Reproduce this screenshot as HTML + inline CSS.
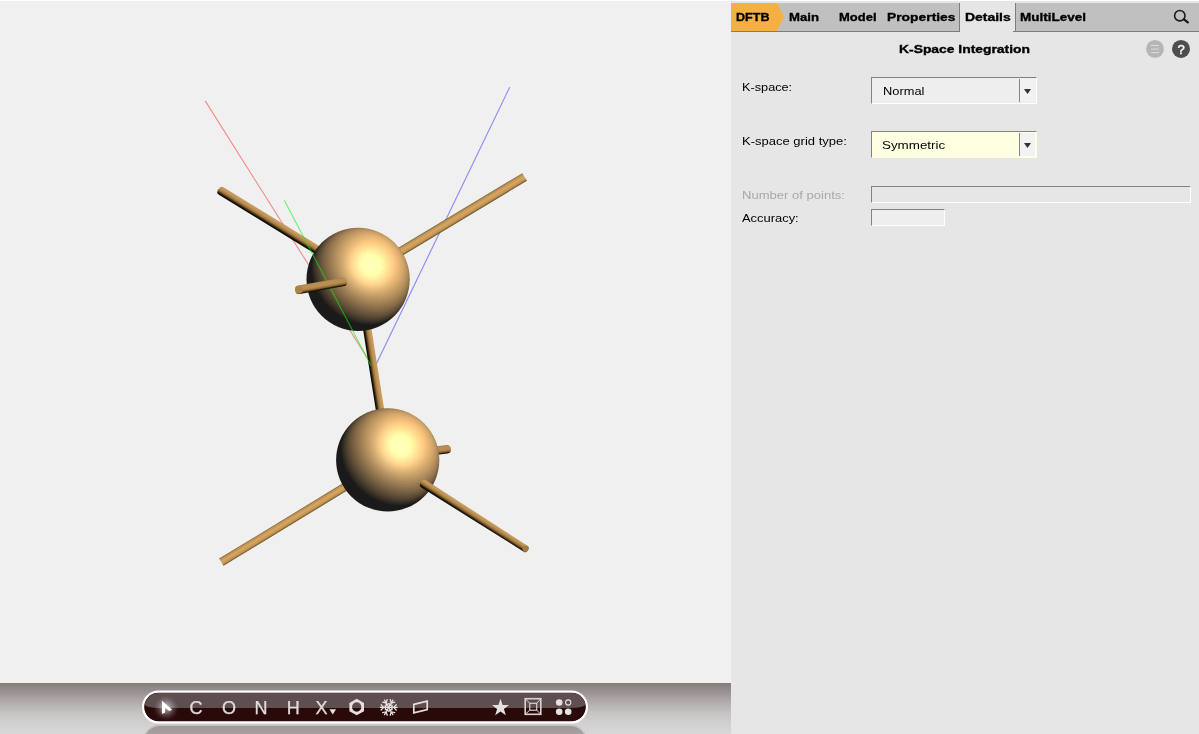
<!DOCTYPE html>
<html>
<head>
<meta charset="utf-8">
<title>AMSinput</title>
<style>
*{box-sizing:border-box;margin:0;padding:0}
html,body{width:1199px;height:734px;overflow:hidden;background:#e6e6e6;font-family:"Liberation Sans",sans-serif;}
#root{position:relative;width:1199px;height:734px;overflow:hidden;background:#e6e6e6}
#view{position:absolute;left:0;top:0;width:731px;height:683px;background:#f0f0f0;border-top:1px solid #fff}
#scene{position:absolute;left:0;top:0;width:731px;height:683px}
#bar{position:absolute;left:0;top:683px;width:731px;height:51px;background:linear-gradient(to bottom,#857b7b 0px,#9a9292 9px,#b3aeae 20px,#c6c3c3 30px,#d2d0d0 41px,#d9d8d8 51px)}
#barsvg{position:absolute;left:0;top:0;width:731px;height:51px}
#panel{position:absolute;left:731px;top:0;width:468px;height:734px;background:#e6e6e6}
#topline{position:absolute;left:0;top:0;width:1199px;height:1px;background:#fff}
#topline2{position:absolute;left:731px;top:1px;width:468px;height:2px;background:#f4f4f4}
#tabs{position:absolute;left:0;top:3px;width:468px;height:28px;background:#c0c0c0}
#tabline1{position:absolute;left:0;top:31px;width:229px;height:1px;background:#7d7d7d}
#tabline2{position:absolute;left:282px;top:31px;width:186px;height:1px;background:#7d7d7d}
#tabsel{position:absolute;left:229px;top:3px;width:55px;height:29px;background:#e6e6e6}
.vsep{position:absolute;top:3px;width:1px;height:28px;background:#7d7d7d}
.t{position:absolute;white-space:nowrap;color:#000;line-height:1;transform-origin:0 0}
.b{font-weight:bold;-webkit-text-stroke:0.35px #000}
.combo{position:absolute;left:140px;width:166px;height:27px;border-top:1px solid #828282;border-left:1px solid #828282;border-bottom:1px solid #fff;border-right:1px solid #fff;background:#eee}
.combo .btn{position:absolute;left:147px;top:1px;width:16px;height:23px;background:#f2f2f2;border-left:1px solid #868686}
.combo svg{position:absolute;left:152px;top:11px}
.entry{position:absolute;left:140px;height:17px;border-top:1px solid #828282;border-left:1px solid #828282;border-bottom:1px solid #fff;border-right:1px solid #fff}
</style>
</head>
<body>
<div id="root">
  <div id="view">
    <svg id="scene" width="731" height="683" viewBox="0 0 731 683">
      <defs>
        <clipPath id="ballclip"><circle cx="0" cy="0" r="51.6"/></clipPath>
        
<filter id="ballf" filterUnits="userSpaceOnUse" x="-60" y="-60" width="330" height="120" color-interpolation-filters="sRGB">
<feGaussianBlur in="SourceGraphic" stdDeviation="0.7" result="b"/>
<feOffset in="b" dx="-200" dy="0" result="sh"/>
<feComposite in="b" in2="sh" operator="arithmetic" k1="0" k2="1" k3="1" k4="0"/>
</filter>
<g id="ball">
<g clip-path="url(#ballclip)">
<g filter="url(#ballf)">
<rect x="-60" y="-60" width="120" height="120" fill="#1a1a1a"/>
<path fill="#201e1c" d="M-57.8,-57.8 57.8,-57.8 57.8,50 39.1,33.8 36,36.8 32.6,39.5 29.3,41.4 25.4,43.2 21.2,44.4 17,45.3 12.5,45.6 7.9,45.5 3.3,45 -1.5,44 -6.2,42.6 -10.9,40.6 -15.4,38.3 -19.8,35.6 -23.9,32.7 -27.8,29.3 -31.4,25.7 -34.7,21.8 -37.6,17.8 -40.1,13.7 -42.2,9.4 -44,5 -45.3,0.6 -46.3,-4 -46.7,-8.5 -46.8,-12.7 -46.3,-17 -45.5,-21.1 -44.3,-24.7 -42.6,-28.4 -40.6,-31.6 -37.8,-35.3 -37.8,-35.4 -57.8,-54.3Z"/>
<path fill="#26231f" d="M-56.7,-57.8 57.8,-57.8 57.8,46 40.5,32.2 37.2,35.6 34.1,38.1 30.8,40.3 27.2,42 22.9,43.5 18.7,44.5 14.3,45 9.6,45 5,44.6 0.2,43.7 -4.6,42.3 -9.4,40.5 -13.9,38.3 -18.3,35.6 -22.5,32.7 -26.6,29.3 -30.3,25.6 -33.7,21.7 -36.8,17.5 -39.4,13.3 -41.6,8.9 -43.5,4.2 -44.9,-0.4 -45.8,-5 -46.2,-9.6 -46.2,-14.1 -45.7,-18.3 -44.7,-22.5 -43.3,-26.2 -41.4,-30.1 -39.1,-33.5 -36.2,-36.9Z"/>
<path fill="#2b2722" d="M-52.3,-57.8 57.8,-57.8 57.8,42.2 41.8,30.6 37.8,34.9 34.5,37.6 30.4,40.1 25.6,42.2 20.6,43.6 15.4,44.3 9.8,44.3 4.3,43.7 0.2,42.9 -3.9,41.7 -7.8,40.3 -11.8,38.5 -15.5,36.4 -19.3,34 -22.8,31.4 -26.2,28.5 -29.9,24.9 -33.4,20.8 -36.4,16.6 -39.1,12.2 -41.4,7.5 -43.2,2.9 -44.4,-1.7 -45.3,-6.4 -45.6,-11 -45.5,-15.6 -44.9,-19.8 -43.7,-24.2 -42.2,-28 -40.2,-31.6 -38.1,-34.5 -34.7,-38.3Z"/>
<path fill="#312b24" d="M-48.1,-57.8 57.8,-57.8 57.8,38.7 43,28.8 39.5,32.9 36.1,36 32.2,38.7 27.5,41 22.5,42.6 17.5,43.4 12.1,43.7 6.5,43.3 2.2,42.6 -2.1,41.4 -6.4,40 -10.4,38.2 -14.4,36 -18.3,33.6 -22.1,30.8 -25.6,27.9 -28.7,24.9 -31.7,21.6 -34.4,18.1 -36.8,14.5 -38.9,10.8 -40.8,6.9 -42.3,3.1 -43.5,-0.8 -44.6,-6.5 -45,-12.1 -44.7,-17.5 -43.7,-22.7 -42.1,-27.4 -39.8,-31.8 -37.4,-35.3 -33.1,-39.8Z"/>
<path fill="#373026" d="M-44.2,-57.8 57.8,-57.8 57.8,35.3 44.1,27 41,31 37.6,34.5 33.7,37.4 29.3,39.7 24.5,41.5 19.3,42.6 14.1,43 8.5,42.8 4,42.1 -0.4,41.1 -4.7,39.7 -9.1,37.9 -13.4,35.6 -17.5,33.1 -21.4,30.3 -25.1,27.2 -28.3,24 -31.4,20.5 -34.1,17 -36.6,13.1 -38.8,9.2 -40.6,5.1 -42.1,1 -43.2,-3.1 -44.1,-8.7 -44.4,-14.1 -43.9,-19.3 -42.7,-24.5 -40.8,-29.3 -38.3,-33.6 -35.3,-37.4 -31.4,-41Z"/>
<path fill="#3c3429" d="M-40.5,-57.8 57.8,-57.8 57.8,32.1 45.3,25.1 42,29.7 38.7,33.2 35.1,36.1 30.8,38.5 26.2,40.4 21.2,41.6 16,42.2 10.4,42.2 5.8,41.6 1.2,40.6 -3.3,39.3 -7.9,37.4 -12.3,35.2 -16.6,32.6 -20.6,29.7 -24.5,26.5 -27.9,23.1 -31.1,19.5 -34,15.6 -36.5,11.6 -38.7,7.3 -40.5,3.3 -41.9,-1 -42.9,-5.4 -43.6,-11 -43.6,-16.4 -43,-21.4 -41.6,-26.4 -39.7,-30.8 -37,-35.1 -34,-38.5 -29.7,-42.4Z"/>
<path fill="#42382c" d="M-37,-57.8 57.8,-57.8 57.8,29 46.2,23.2 43.3,27.7 40.3,31.3 36.6,34.5 32.4,37.2 27.7,39.2 22.9,40.6 17.7,41.4 12.3,41.5 7.5,41 2.9,40.2 -1.9,38.8 -6.6,37 -11.2,34.8 -15.6,32.1 -19.9,29.1 -23.9,25.7 -27.4,22.3 -30.6,18.5 -33.6,14.4 -36.2,10.2 -38.4,6 -40.2,1.5 -41.5,-2.9 -42.4,-7.3 -43,-12.7 -42.8,-18.1 -42,-23.1 -40.4,-28.1 -38.3,-32.6 -35.5,-36.6 -32,-40.3 -27.8,-43.5Z"/>
<path fill="#483d2e" d="M-33.6,-57.8 57.8,-57.8 57.8,26 47.2,21.2 44.5,25.8 41.6,29.5 38.1,32.8 34.1,35.7 29.5,38 24.7,39.5 19.5,40.5 14.1,40.7 9.2,40.4 4.2,39.6 -0.8,38.2 -5.6,36.4 -10.4,34.1 -14.8,31.5 -19.3,28.4 -23.3,24.9 -27,21.3 -30.3,17.3 -33.3,13.2 -35.9,8.9 -38.1,4.4 -39.8,-0.2 -41.1,-4.8 -41.9,-9.4 -42.3,-14.8 -41.9,-20.2 -40.8,-25.2 -39.1,-30.1 -36.8,-34.3 -33.7,-38.3 -30.3,-41.6 -26,-44.7Z"/>
<path fill="#4e4130" d="M-30.3,-57.8 57.8,-57.8 57.8,23 48,19.1 45.7,23.7 42.8,27.8 39.3,31.4 35.4,34.3 31.1,36.6 26.4,38.3 21.2,39.5 15.8,39.9 10.8,39.7 5.8,39 0.8,37.7 -4.2,35.9 -9.1,33.7 -13.9,30.9 -18.3,27.8 -22.6,24.3 -26.4,20.4 -29.8,16.4 -32.8,12.1 -35.4,7.7 -37.6,3.1 -39.3,-1.5 -40.6,-6.4 -41.3,-11.2 -41.5,-16.6 -40.9,-22 -39.7,-27 -37.8,-31.6 -35.3,-35.8 -32.1,-39.7 -28.3,-43 -24.1,-45.7Z"/>
<path fill="#544633" d="M-27.2,-57.8 57.8,-57.8 57.8,20.1 48.7,17 48.5,17.9 46.6,21.8 43.9,26 40.6,29.6 37,32.6 32.6,35.3 27.9,37.2 22.7,38.4 17.3,39 12.3,38.9 7.1,38.3 1.9,37.1 -3.1,35.3 -8.1,33.1 -12.9,30.3 -17.5,27.1 -21.9,23.5 -25.7,19.6 -29.3,15.4 -32.4,11 -35.1,6.3 -37.2,1.5 -38.9,-3.5 -40,-8.3 -40.6,-13.1 -40.6,-18.5 -39.9,-23.7 -38.5,-28.5 -36.4,-33.2 -33.7,-37.4 -30.3,-41 -26.8,-43.9 -22,-46.8Z"/>
<path fill="#594a36" d="M-24.1,-57.8 57.8,-57.8 57.8,17.3 49.5,14.8 47.4,20 45.1,24 42,27.8 38.1,31.2 33.9,33.9 29.3,35.9 24.3,37.3 18.9,38.1 13.9,38.1 8.6,37.6 3.3,36.4 -1.9,34.7 -7.1,32.4 -12,29.7 -16.8,26.4 -21.2,22.7 -25.2,18.7 -28.7,14.4 -31.9,9.8 -34.6,5 -36.8,0 -38.3,-5 -39.3,-9.8 -39.8,-14.8 -39.7,-20.2 -38.8,-25.4 -37.2,-30.3 -34.9,-34.9 -32.1,-38.7 -28.7,-42.2 -25.1,-44.9 -19.9,-47.8Z"/>
<path fill="#5f4e38" d="M-21,-57.8 57.8,-57.8 57.8,14.4 50.1,12.5 50,13.1 48.4,17.6 46,22 43.2,25.9 39.5,29.5 35.3,32.4 30.6,34.7 25.6,36.2 20.4,37.1 15.2,37.2 10,36.8 4.6,35.7 -0.8,34 -6,31.8 -11,29.1 -15.8,25.8 -20.4,21.9 -24.5,17.9 -28.1,13.5 -31.4,8.7 -34,3.9 -36.1,-1.2 -37.7,-6.4 -38.7,-11.6 -39,-16.6 -38.7,-22 -37.6,-27.2 -35.8,-32 -33.3,-36.4 -30.2,-40.3 -26.7,-43.5 -22.6,-46.2 -17.7,-48.5Z"/>
<path fill="#65533a" d="M-18,-57.8 57.8,-57.8 57.8,11.6 50.7,10.2 49.9,12.9 48.5,16.8 47.2,19.6 45.5,22.4 43.5,24.9 41.2,27.3 38.7,29.4 36,31.2 32.4,33.2 28.3,34.7 24.1,35.7 19.6,36.2 15,36.3 10.2,35.8 5.5,34.9 0.8,33.5 -3.9,31.6 -8.4,29.3 -12.8,26.6 -17,23.5 -20.8,20 -24.5,16.2 -27.7,12.1 -30.6,7.9 -32.7,4 -34.5,0 -36,-4.1 -37.1,-8.3 -37.8,-12.5 -38.1,-16.6 -38,-20.6 -37.4,-24.5 -36.3,-28.9 -34.6,-32.9 -32.6,-36.6 -29.9,-40.1 -26.9,-43 -23.5,-45.5 -19.7,-47.6 -15.4,-49.3Z"/>
<path fill="#6a573d" d="M-15,-57.8 57.8,-57.8 57.8,8.7 51,7.7 50.3,11.2 49.1,14.9 47.6,18.3 45.8,21.2 43.7,24 41.2,26.6 38.5,28.8 35.6,30.7 32,32.5 27.9,33.9 23.5,34.9 19.1,35.3 14.4,35.2 9.6,34.7 4.8,33.6 0.2,32.1 -4.4,30.1 -8.9,27.7 -13.3,24.9 -17.3,21.7 -21.2,18.1 -24.6,14.3 -27.7,10.2 -30.4,5.9 -32.6,1.8 -34.3,-2.3 -35.6,-6.5 -36.5,-10.6 -37,-14.8 -37.1,-18.9 -36.9,-22.7 -36.1,-26.6 -34.8,-30.8 -33,-34.7 -30.8,-38.1 -28,-41.4 -25,-44.1 -21.6,-46.4 -17.7,-48.4 -13,-50.1Z"/>
<path fill="#705b40" d="M-12,-57.8 57.8,-57.8 57.8,5.8 51.4,5.2 50.7,9.2 49.5,13.4 48,17 46.2,20 43.9,23.1 41.2,25.9 38.3,28.2 35.1,30.2 31.2,31.9 27.2,33.2 22.7,34 18.3,34.3 13.7,34.1 9.1,33.4 4.2,32.3 -0.4,30.6 -5,28.5 -9.4,26 -13.7,23.1 -17.6,19.8 -21.4,16.2 -24.7,12.3 -27.7,8.1 -30.3,3.9 -32.2,-0.2 -33.9,-4.4 -35,-8.7 -35.8,-12.7 -36.2,-17 -36.1,-21 -35.6,-24.9 -34.7,-28.7 -33.2,-32.7 -31.3,-36.4 -28.9,-39.7 -26,-42.8 -22.6,-45.5 -19,-47.6 -15.4,-49.1 -10.5,-50.7Z"/>
<path fill="#766042" d="M-8.9,-57.8 57.8,-57.8 57.8,2.8 51.6,2.5 51.1,6.9 50.1,11 48.5,15.1 46.6,18.7 44.1,22.1 41.2,25 38,27.6 34.3,29.7 30.4,31.3 26.2,32.4 21.8,33.1 17.3,33.2 12.7,32.9 8.1,32.1 3.5,30.8 -1.2,29 -5.8,26.8 -10,24.2 -14.2,21.2 -18.1,17.8 -21.7,14.1 -24.9,10.2 -27.7,6 -30.2,1.5 -32,-2.6 -33.4,-6.7 -34.4,-11 -35,-15 -35.2,-19.1 -34.9,-23.1 -34.3,-27 -33.2,-30.8 -31.5,-34.7 -29.2,-38.3 -26.5,-41.6 -23.6,-44.3 -20.2,-46.6 -16.5,-48.5 -12.8,-49.9 -7.9,-51Z"/>
<path fill="#7c6444" d="M-5.7,-57.8 57.8,-57.8 57.8,-0.3 51.6,-0.3 51.2,5.1 50.5,9 48.9,13.5 46.8,17.6 44.1,21.2 41,24.3 37.5,27 33.5,29.1 29.7,30.6 25.4,31.6 21,32.1 16.6,32.1 11.9,31.7 7.3,30.7 2.7,29.3 -2,27.4 -6.4,25.1 -10.6,22.3 -14.6,19.2 -18.5,15.7 -21.9,11.9 -25,7.9 -27.7,3.7 -29.9,-0.8 -31.6,-4.9 -32.8,-9.1 -33.7,-13.3 -34.1,-17.3 -34.1,-21.4 -33.6,-25.4 -32.8,-29.3 -31.5,-32.7 -29.7,-36.4 -27.3,-39.9 -24.4,-43 -21.3,-45.5 -17.9,-47.6 -14,-49.3 -10.2,-50.5 -5.1,-51.4Z"/>
<path fill="#826847" d="M-2.4,-57.8 57.8,-57.8 57.8,-3.6 51.6,-3.2 51.4,2.5 50.7,7.3 49.1,12.2 47,16.4 44.3,20.1 40.8,23.6 37,26.3 32.7,28.4 28.7,29.8 24.5,30.7 20,31 15.6,30.9 11,30.3 6.4,29.2 1.7,27.6 -2.9,25.5 -7.1,23.1 -11.4,20.2 -15.3,17 -18.9,13.4 -22.1,9.6 -25,5.6 -27.5,1.3 -29.7,-3.2 -31.1,-7.3 -32.2,-11.6 -32.9,-15.8 -33.1,-19.8 -32.8,-23.9 -32.2,-27.7 -31.1,-31.4 -29.7,-34.8 -27.6,-38.3 -25.1,-41.4 -22.1,-44.3 -18.9,-46.6 -15.3,-48.5 -11.1,-50.1 -6.9,-51.1 -2.2,-51.6Z"/>
<path fill="#876d4a" d="M1,-57.8 57.8,-57.8 57.8,-7.1 51.2,-6.3 51.4,-6 51.5,-3.3 51.4,0.9 51,4.3 50.5,7.1 49.7,9.7 48.5,12.5 47.2,15.1 45.5,17.7 42.6,21 39.3,23.8 35.6,26.1 31.6,27.8 27.5,29 23.3,29.7 18.9,29.9 14.3,29.6 9.6,28.7 5,27.4 0.4,25.7 -3.9,23.5 -8.1,20.9 -12.2,17.9 -16,14.5 -19.5,10.8 -22.5,6.9 -25.2,2.8 -27.5,-1.5 -29.4,-6 -30.6,-10.1 -31.5,-14.3 -31.9,-18.3 -31.9,-22.3 -31.4,-26.2 -30.6,-29.9 -29.3,-33.5 -27.6,-36.8 -25.2,-40.3 -22.6,-43.2 -19.5,-45.7 -16.1,-47.8 -12.2,-49.5 -8.2,-50.7 -3.1,-51.5 0.9,-51.6Z"/>
<path fill="#8d714c" d="M57.8,-57.8 57.8,-10.9 50.9,-9.6 51.3,-5.4 51.4,-0.6 51,3.1 50.1,7.3 48.7,11 46.8,14.7 44.5,17.9 42,20.5 39.1,22.9 36,24.8 32.7,26.3 29.1,27.5 25.2,28.3 21.4,28.6 17.3,28.6 13.3,28.2 9.2,27.3 5,26.1 1,24.5 -3.1,22.4 -6.9,20.1 -10.6,17.5 -14.1,14.5 -17.3,11.2 -20,8.1 -22.5,4.6 -24.8,1 -26.6,-2.7 -28.1,-6.4 -29.4,-10.2 -30.2,-14.1 -30.7,-17.9 -30.8,-21.6 -30.5,-25.2 -29.8,-28.7 -28.8,-32.2 -27.4,-35.4 -25.7,-38.3 -23.7,-41 -21.2,-43.5 -18.6,-45.7 -15.9,-47.4 -12.8,-48.9 -9.5,-50.1 -6.4,-50.9 -2.3,-51.4 4,-51.6 4.3,-51.4 4.8,-57.8Z"/>
<path fill="#93754e" d="M57.8,-57.8 57.8,-15.2 50.1,-13.2 50.9,-8.3 51.2,-3.5 51,0.9 50.3,5.2 48.9,9.3 47.2,12.9 44.9,16.3 41.9,19.5 39.3,21.6 36.2,23.5 32.9,25.1 29.3,26.3 25.6,27 21.8,27.4 17.7,27.3 13.7,26.9 9.6,26.1 5.6,24.9 1.5,23.2 -2.5,21.2 -6.3,18.9 -9.8,16.3 -13.3,13.3 -16.4,10.2 -19.1,7.1 -21.5,3.7 -23.7,0.1 -25.5,-3.5 -27,-7.1 -28.2,-11 -29,-14.8 -29.5,-18.5 -29.5,-22.2 -29.2,-25.8 -28.6,-29.3 -27.6,-32.6 -26.2,-35.6 -24.5,-38.5 -22.5,-41.2 -20.2,-43.5 -17.7,-45.7 -14.6,-47.6 -11.3,-49.1 -7.8,-50.3 -4.2,-51 -0.5,-51.4 3.3,-51.5 7.9,-51 8.9,-57.8Z"/>
<path fill="#987a51" d="M57.8,-57.8 57.8,-20.2 48.7,-17.1 50,-12.9 50.9,-7.6 51,-2.5 50.5,2.6 49.3,6.9 47.4,11.3 44.9,15.1 41.8,18.4 39.1,20.6 36,22.5 32.7,23.9 29.3,25 25.6,25.8 22,26.1 18.1,26 14.1,25.6 10,24.8 6,23.5 2.1,22 -1.7,20 -5.4,17.8 -8.9,15.2 -12.3,12.3 -15.4,9.2 -18.1,6 -20.4,2.8 -22.5,-0.7 -24.4,-4.2 -25.8,-7.9 -27,-11.6 -27.8,-15.2 -28.2,-18.9 -28.3,-22.5 -28,-26 -27.4,-29.5 -26.4,-32.7 -25.1,-35.6 -23.4,-38.5 -21.4,-41.2 -19.2,-43.5 -16,-46 -12.8,-48 -9.1,-49.5 -5,-50.6 -0.8,-51.2 2.9,-51.3 8.3,-50.9 11.9,-50.3 13.7,-57.8Z"/>
<path fill="#9e7e54" d="M57.8,-57.8 57.8,-26.5 47,-21.5 49,-16.2 50.3,-10.7 50.8,-5.2 50.5,0.2 49.4,5 47.6,9.5 45.1,13.6 41.8,17.2 39.1,19.3 36.2,21.1 32.9,22.6 29.6,23.7 26,24.4 22.2,24.8 18.3,24.7 14.4,24.2 10.4,23.4 6.5,22.2 2.7,20.6 -1,18.8 -4.6,16.5 -8.1,14 -11.4,11.2 -14.4,8.1 -17,5 -19.4,1.7 -21.4,-1.5 -23.1,-5 -24.6,-8.5 -25.7,-12.1 -26.5,-15.8 -26.9,-19.5 -27,-22.9 -26.7,-26.4 -26.1,-29.7 -25.1,-32.9 -23.7,-36 -22.2,-38.7 -20.3,-41.2 -18,-43.5 -14.9,-46 -11.2,-48.2 -7.2,-49.7 -2.7,-50.8 1.7,-51.2 6.3,-51 11.4,-50.3 16.6,-49 19.5,-57.8Z"/>
<path fill="#a48256" d="M57.8,-57.8 57.8,-35.4 44.1,-27 46.9,-21.6 49.1,-15.3 50.3,-9.3 50.5,-6.4 50.5,-3.5 50.2,-0.8 49.7,2 48.9,4.7 47.9,7.3 46.6,9.8 45.3,11.9 43.5,14.1 41.6,16 39,18.1 36.1,19.8 32.9,21.3 29.7,22.3 26.2,23 22.5,23.4 18.9,23.3 15,22.9 11.2,22.1 7.3,20.9 3.5,19.4 -0.1,17.5 -3.7,15.4 -7.1,12.9 -10.4,10 -13.3,7.1 -15.8,4.1 -18.1,1 -20.1,-2.3 -21.9,-5.8 -23.3,-9.2 -24.4,-12.7 -25.1,-16.4 -25.6,-19.8 -25.6,-23.3 -25.4,-26.8 -24.7,-30.1 -23.8,-33.1 -22.5,-36 -20.9,-38.7 -19,-41.2 -16.8,-43.5 -13,-46.4 -8.9,-48.5 -4.2,-50.1 0.7,-50.9 6,-50.9 11,-50.3 17.3,-48.6 22.3,-46.6 27.6,-57.8Z"/>
<path fill="#aa8758" d="M54.9,-57.8 35.6,-37.5 38.7,-34.3 41.2,-31.2 43.4,-27.9 45.5,-24.3 47,-21 48.4,-17.3 49.3,-13.7 49.9,-10.4 50.1,-6.9 50.1,-3.5 49.6,-0.2 48.8,3.1 47.7,6 46.2,8.9 44.5,11.4 42.4,13.9 40.1,15.9 37.4,17.8 34.5,19.3 31.2,20.5 27.9,21.3 24.5,21.8 20.8,21.9 17.1,21.7 13.5,21.1 9.8,20.1 6.2,18.8 2.5,17.2 -1,15.2 -4.4,13 -7.7,10.4 -10.6,7.7 -13.2,4.8 -15.7,1.7 -17.9,-1.5 -19.7,-4.8 -21.3,-8.3 -22.5,-11.8 -23.4,-15.2 -24,-18.7 -24.2,-22.2 -24.1,-25.6 -23.6,-28.9 -22.9,-32 -21.8,-34.9 -20.3,-37.8 -18.5,-40.3 -16.5,-42.6 -14.4,-44.5 -11.9,-46.2 -9.1,-47.8 -6.3,-48.9 -3,-49.9 0.2,-50.4 3.5,-50.7 6.7,-50.6 10,-50.3 13.1,-49.7 16.6,-48.7 20.2,-47.4 24.3,-45.6 27.4,-43.8 31,-41.4 33.6,-39.3 49.4,-57.8Z"/>
<path fill="#b08b5b" d="M-12.7,-44.7 -10.1,-46.4 -7.5,-47.8 -4.5,-48.9 -1.5,-49.7 1.9,-50.2 5.2,-50.4 8.5,-50.2 12.1,-49.7 15.5,-48.9 19,-47.8 22.7,-46.2 26,-44.5 29.3,-42.4 32.2,-40.3 34.9,-38 38,-34.9 40.3,-32.2 42.8,-28.7 44.7,-25.5 46.2,-22.4 47.6,-19.1 48.5,-15.9 49.3,-12.3 49.7,-9.2 49.7,-6 49.5,-2.9 48.9,0.3 48,3.3 46.8,6.1 45.4,8.5 43.7,10.8 41.6,13.1 39.1,15.2 36.4,16.9 33.5,18.2 30.4,19.3 27.2,20 23.7,20.4 20,20.4 16.4,20 12.7,19.3 9.1,18.2 5.4,16.8 1.9,15.1 -1.4,13.1 -4.6,10.8 -7.7,8.2 -10.6,5.4 -13.1,2.5 -15.5,-0.8 -17.5,-4.1 -19.3,-7.6 -20.6,-11 -21.7,-14.6 -22.4,-18.3 -22.7,-21.8 -22.7,-25.2 -22.3,-28.5 -21.5,-31.8 -20.4,-34.9 -18.9,-37.8 -17.2,-40.3 -15.1,-42.6Z"/>
<path fill="#b58f5e" d="M-11.4,-44.5 -8.8,-46.2 -6.2,-47.5 -3.5,-48.6 -0.4,-49.4 2.7,-49.8 6,-50 9.2,-49.8 12.8,-49.3 16,-48.5 19,-47.6 22.4,-46.2 25.8,-44.5 28.9,-42.6 31.6,-40.7 34.8,-38 37.4,-35.4 39.7,-32.8 42,-29.7 43.9,-26.6 45.5,-23.6 46.8,-20.5 48,-17 48.7,-13.6 49.2,-10.4 49.3,-7.1 49,-3.9 48.5,-1 47.6,2.1 46.4,4.9 45,7.3 43.3,9.6 41.2,11.8 38.9,13.7 36.2,15.4 33.3,16.8 30.2,17.8 27,18.5 23.7,18.8 20.2,18.8 16.8,18.4 13.1,17.7 9.6,16.7 6.2,15.3 2.8,13.7 -0.4,11.8 -3.7,9.4 -6.6,6.9 -9.4,4.2 -11.9,1.3 -14.3,-1.9 -16.2,-5.1 -17.9,-8.5 -19.2,-11.9 -20.2,-15.3 -20.9,-18.7 -21.2,-22.2 -21.2,-25.4 -20.8,-28.7 -20,-31.9 -18.9,-34.9 -17.4,-37.8 -15.7,-40.3 -13.6,-42.6Z"/>
<path fill="#bb9460" d="M-9.7,-44.5 -7.3,-46 -4.5,-47.4 -1.7,-48.4 1.2,-49 4.2,-49.4 7.3,-49.5 10.4,-49.3 14,-48.7 17.1,-48 20.4,-46.8 23.5,-45.5 26.8,-43.7 29.5,-42 32.3,-39.9 35.2,-37.4 37.6,-35 39.5,-32.7 41.8,-29.6 43.7,-26.5 45.3,-23.5 46.6,-20.2 47.6,-17.1 48.3,-13.9 48.6,-10.8 48.7,-7.7 48.5,-4.6 47.9,-1.7 47.1,1.2 45.9,3.9 44.5,6.2 42.8,8.5 40.8,10.5 38.5,12.4 36,13.9 33.3,15.2 30.2,16.2 27.2,16.9 23.9,17.2 20.4,17.2 17,16.8 13.5,16.1 10,15 6.5,13.6 3.3,12 0.1,10 -2.9,7.9 -5.8,5.4 -8.5,2.7 -10.9,-0.2 -13.1,-3.3 -14.9,-6.4 -16.5,-9.6 -17.8,-12.9 -18.8,-16.4 -19.4,-19.8 -19.6,-23.1 -19.5,-26.4 -19.1,-29.5 -18.3,-32.6 -17.1,-35.4 -15.8,-38 -14,-40.5 -12,-42.6Z"/>
<path fill="#c19862" d="M-8.6,-43.9 -6.3,-45.5 -3.7,-46.8 -1,-47.8 1.7,-48.4 4.6,-48.8 7.7,-49 10.8,-48.8 13.9,-48.4 17.2,-47.6 20.1,-46.6 23.3,-45.3 26.3,-43.7 29.1,-42 32,-39.9 34.5,-37.8 37.2,-35.1 39.5,-32.4 41.4,-29.7 43.2,-27 44.7,-24 46,-20.7 47,-17.7 47.6,-14.8 48,-11.8 48.1,-8.9 47.9,-6 47.4,-3.1 46.6,-0.4 45.5,2.3 44.1,4.7 42.6,6.8 40.6,8.9 38.5,10.6 36,12.2 33.3,13.5 30.4,14.5 27.4,15.1 24.3,15.5 21,15.5 17.7,15.1 14.3,14.4 11,13.5 7.7,12.2 4.6,10.7 1.5,8.8 -1.5,6.6 -4.4,4.2 -6.9,1.7 -9.2,-1 -11.5,-4 -13.3,-7.1 -14.9,-10.2 -16.1,-13.3 -17,-16.6 -17.6,-19.8 -17.9,-23.1 -17.9,-26.2 -17.5,-29.3 -16.8,-32.2 -15.7,-35.1 -14.4,-37.6 -12.7,-39.9 -10.8,-42Z"/>
<path fill="#c69c65" d="M-7.6,-43.2 -5.4,-44.7 -2.9,-46 -0.4,-47 2.5,-47.8 5.4,-48.2 8.3,-48.4 11.4,-48.2 14.3,-47.8 17,-47.2 20,-46.2 22.9,-45.1 26,-43.5 28.8,-41.8 31.8,-39.7 34.3,-37.6 36.6,-35.3 40.6,-30.3 42.4,-27.6 43.9,-24.7 45.3,-21.5 46.2,-18.5 46.9,-15.6 47.3,-12.7 47.4,-9.8 47.2,-6.9 46.7,-4.2 46,-1.5 44.9,1 43.6,3.3 42,5.4 40.3,7.3 38.1,9 35.8,10.5 33.3,11.8 30.4,12.7 27.5,13.3 24.5,13.7 21.4,13.7 18.3,13.4 15,12.7 11.9,11.9 8.9,10.7 5.8,9.2 2.9,7.5 0,5.5 -2.7,3.3 -5.3,0.8 -7.5,-1.8 -9.6,-4.6 -11.4,-7.5 -13,-10.6 -14.2,-13.7 -15.2,-16.8 -15.8,-19.8 -16.1,-22.9 -16.1,-26 -15.8,-28.9 -15.2,-31.6 -14.3,-34.4 -13.1,-36.8 -11.5,-39.1 -9.7,-41.2Z"/>
<path fill="#cca168" d="M-5.7,-43 -3.7,-44.3 -1.3,-45.5 1.2,-46.5 3.9,-47.1 6.5,-47.5 9.4,-47.6 12.3,-47.5 15.2,-47 20.8,-45.4 23.5,-44.3 26.5,-42.8 31.7,-39.3 34.2,-37.2 36.4,-34.9 38.5,-32.5 40.5,-29.9 43.3,-24.8 44.5,-22.1 45.5,-19.1 46.1,-16.2 46.5,-13.3 46.6,-10.6 46.4,-7.9 45.9,-5.2 45.2,-2.7 44.2,-0.4 43,1.8 41.4,3.9 39.7,5.7 37.6,7.5 35.3,8.9 32.9,10 30.2,10.9 27.4,11.5 24.5,11.8 21.6,11.8 18.5,11.5 15.4,10.8 12.3,9.9 9.2,8.7 6.4,7.3 3.5,5.6 0.8,3.7 -1.7,1.5 -4,-0.8 -6.2,-3.3 -8.2,-6 -10,-8.9 -11.4,-11.8 -12.5,-14.6 -13.4,-17.7 -14,-20.8 -14.3,-23.7 -14.2,-26.6 -13.9,-29.5 -13.2,-32.2 -12.3,-34.7 -11,-37.1 -9.5,-39.3 -7.7,-41.2Z"/>
<path fill="#d2a56a" d="M-3.9,-42.6 -1.7,-43.9 0.4,-45 2.7,-45.8 5.2,-46.4 7.7,-46.7 10.4,-46.8 13.1,-46.6 15.8,-46.2 21.2,-44.7 23.9,-43.5 26.9,-42 31.9,-38.5 36.2,-34.5 39.9,-29.8 42.8,-24.7 43.9,-21.8 44.7,-19.3 45.3,-16.6 45.6,-13.9 45.7,-11.2 45.5,-8.7 45,-6.2 44.3,-3.9 43.3,-1.5 42,0.6 40.5,2.5 38.9,4.2 36.9,5.8 34.7,7.1 32.4,8.2 29.9,9 27.2,9.5 24.5,9.8 21.6,9.8 18.7,9.4 15.8,8.9 12.9,8 10,6.8 7.1,5.4 4.3,3.7 1.7,1.8 -0.6,-0.2 -2.9,-2.5 -5,-5 -6.8,-7.5 -8.4,-10.2 -9.8,-13.1 -10.8,-15.8 -11.6,-18.7 -12.1,-21.6 -12.3,-24.4 -12.2,-27.2 -11.9,-29.9 -11.2,-32.4 -10.2,-34.9 -9.1,-37 -7.5,-39.1 -5.8,-41Z"/>
<path fill="#d8aa6c" d="M-2.5,-41.6 -0.6,-42.9 1.4,-43.9 3.7,-44.8 6,-45.4 8.5,-45.8 11,-45.9 16.2,-45.4 21.3,-43.9 26.4,-41.6 31.2,-38.3 35.4,-34.4 39.1,-29.9 41.8,-25.1 43.7,-20 44.5,-15 44.6,-12.5 44.5,-10 44,-7.7 43.3,-5.3 42.4,-3.1 41.3,-1.2 39.9,0.7 38.3,2.3 36.4,3.8 34.5,5 32.2,6.1 29.9,6.9 27.4,7.4 24.7,7.7 22,7.7 19.3,7.4 16.4,6.8 13.7,6 11,4.9 8.3,3.6 5.8,2.1 3.3,0.3 -1.2,-3.8 -4.8,-8.5 -6.4,-11 -7.7,-13.7 -8.7,-16.2 -9.5,-18.9 -10,-21.6 -10.2,-24.3 -10.2,-27 -9.9,-29.5 -9.3,-31.8 -8.4,-34.1 -7.3,-36.3 -5.9,-38.3 -4.3,-40.1Z"/>
<path fill="#deae6f" d="M-1,-40.6 1,-42 2.9,-43 7.1,-44.3 11.8,-44.8 16.6,-44.3 21.6,-43 26.2,-40.8 30.8,-37.8 34.7,-34.2 38,-30.2 40.6,-25.6 42.5,-20.8 43.3,-16 43.3,-11.4 42.9,-9.1 42.3,-6.9 41.4,-4.9 40.4,-3.1 39.1,-1.3 37.7,0.2 36,1.6 34,2.9 32,3.9 29.7,4.6 27.4,5.1 24.9,5.4 22.3,5.4 19.8,5.2 17.1,4.6 14.6,3.9 9.6,1.7 4.9,-1.3 0.8,-5.1 -2.7,-9.4 -5.4,-14.3 -6.4,-16.8 -7.2,-19.3 -7.7,-21.8 -8,-24.3 -8,-26.8 -7.7,-29.1 -7.2,-31.4 -6.4,-33.5 -5.4,-35.6 -4.2,-37.4 -2.7,-39.1Z"/>
<path fill="#e3b272" d="M0.9,-39.7 2.6,-40.8 4.4,-41.8 8.3,-43 12.5,-43.5 17.1,-43.1 21.8,-41.8 26.1,-39.9 30.2,-37.2 33.9,-33.8 37,-30 39.5,-25.7 41.1,-21.4 42,-17 41.9,-12.5 41,-8.5 39.3,-4.9 36.8,-1.9 35.3,-0.6 33.4,0.6 31.6,1.5 29.5,2.2 27.4,2.7 25,3 22.7,3 20.2,2.7 15.4,1.6 10.8,-0.4 6.4,-3.3 2.6,-6.7 -0.7,-10.8 -3.2,-15.2 -4.8,-19.8 -5.5,-24.5 -5.3,-28.9 -4.8,-31 -4.1,-33.1 -3.1,-35.1 -1.9,-36.8 -0.6,-38.3Z"/>
<path fill="#e9b774" d="M3.3,-38.7 6.4,-40.5 10,-41.7 14.1,-42 18.1,-41.6 22.2,-40.4 26.2,-38.5 29.9,-36 33.3,-32.9 36.2,-29.3 38.3,-25.4 39.8,-21.4 40.4,-17.3 40.3,-13.5 39.4,-9.8 37.8,-6.6 35.4,-3.9 32.4,-1.7 28.7,-0.3 24.7,0.3 20.2,0 16,-1 11.8,-2.9 7.7,-5.6 4.2,-8.8 1.3,-12.5 -0.9,-16.6 -2.3,-20.8 -2.9,-25 -2.6,-29.1 -2.1,-31 -1.4,-32.9 0.6,-36.1Z"/>
<path fill="#efbb76" d="M5.2,-37 7.9,-38.7 11.2,-39.8 14.6,-40.2 18.3,-39.9 22.1,-38.9 25.6,-37.3 29,-35.1 32,-32.4 34.5,-29.3 36.5,-25.8 37.8,-22.3 38.5,-18.7 38.5,-15.2 37.7,-11.9 36.3,-9.1 34.3,-6.6 31.6,-4.6 28.3,-3.2 24.9,-2.7 21,-2.8 17.1,-3.7 13.3,-5.4 9.8,-7.6 6.7,-10.4 4.1,-13.7 2.1,-17.1 0.7,-20.8 0.1,-24.7 0.3,-28.3 1.2,-31.6 2.9,-34.7Z"/>
<path fill="#f4bf79" d="M8,-35.4 10.4,-36.9 13.1,-37.7 16.2,-38 19.3,-37.7 22.3,-36.8 25.3,-35.4 28.2,-33.5 30.7,-31.2 32.9,-28.5 34.5,-25.7 35.6,-22.7 36.2,-19.6 36.1,-16.6 35.5,-13.9 34.3,-11.5 32.6,-9.4 30.2,-7.7 27.5,-6.6 24.5,-6.1 21.2,-6.2 17.9,-7 14.6,-8.4 11.6,-10.4 9.1,-12.7 6.8,-15.6 5,-18.7 4,-21.8 3.5,-25 3.7,-28.1 4.5,-31 6.1,-33.5Z"/>
<path fill="#fac47c" d="M11.2,-33.1 13.1,-34.2 15.2,-34.9 17.5,-35.1 19.8,-34.8 22.3,-34.1 24.7,-33.1 26.9,-31.6 28.9,-29.7 30.5,-27.7 31.8,-25.4 32.7,-22.9 33.1,-20.6 33,-18.3 32.5,-16.2 31.6,-14.3 30.2,-12.7 28.4,-11.4 26.2,-10.5 23.9,-10.2 21.4,-10.3 18.9,-10.9 16.4,-12 14.1,-13.5 11.9,-15.4 10.2,-17.5 8.8,-20 8,-22.5 7.6,-25 7.8,-27.4 8.5,-29.7 9.6,-31.6Z"/>
<path fill="#ffc87e" d="M15.3,-29.1 16.4,-29.8 17.5,-30.2 18.9,-30.4 20.2,-30.4 21.6,-30.1 23.1,-29.4 24.5,-28.6 25.6,-27.5 26.6,-26.4 27.4,-25 28,-23.7 28.3,-22.3 28.3,-21 28,-19.6 27.5,-18.5 26.7,-17.5 25.7,-16.8 24.5,-16.2 23.1,-16 21.8,-16 20.2,-16.3 18.7,-17 17.3,-17.8 16.2,-18.8 15.1,-20 14.3,-21.4 13.8,-22.7 13.5,-24.3 13.5,-25.6 13.9,-27 14.5,-28.1Z"/>
<rect x="140" y="-60" width="120" height="120" fill="#000"/>
<path fill="#020202" d="M194.4,-44 197.7,-44.8 201.3,-45.4 204.8,-45.6 208.5,-45.5 212.1,-45 215.6,-44.3 218.9,-43.2 222.3,-41.7 225.6,-39.9 228.5,-38 231.4,-35.7 234.1,-33.1 236.4,-30.4 238.7,-27.4 240.6,-24.1 242.1,-20.8 243.3,-17.5 244.3,-13.9 244.8,-10.4 245,-6.7 244.9,-3.3 244.4,0.4 243.6,3.9 242.5,7.1 241,10.4 239.2,13.5 237.2,16.2 234.9,18.8 232.4,21.1 229.5,23.2 226.6,24.9 223.3,26.5 219.8,27.7 216.2,28.5 212.5,29 208.9,29.1 205,28.9 201.3,28.2 197.7,27.3 194,25.9 190.6,24.2 187.3,22.1 184.2,19.8 181.3,17.1 178.7,14.3 176.4,11.2 174.5,7.9 172.7,4.2 171.5,0.6 170.5,-3.1 170,-6.7 169.8,-10.6 170.1,-14.3 170.6,-17.9 171.6,-21.6 173,-25 174.6,-28.3 176.7,-31.4 179.1,-34.3 181.6,-36.8 184.6,-39.2 187.7,-41.1 190.9,-42.7Z"/>
<path fill="#050504" d="M196.7,-41.5 199.8,-42.3 202.9,-42.7 206.2,-42.9 209.4,-42.8 212.7,-42.3 216,-41.6 219.1,-40.5 222,-39.3 224.9,-37.7 227.7,-35.7 230.2,-33.6 232.5,-31.4 234.7,-28.9 236.6,-26.2 238.3,-23.3 239.6,-20.4 240.7,-17.3 241.5,-14.1 242,-10.8 242.2,-7.7 242.1,-4.4 241.7,-1.3 240.9,1.7 240,4.6 238.7,7.5 237.1,10.2 235.1,12.9 233,15.2 230.6,17.4 228.1,19.2 225.4,20.8 222.5,22.2 219.5,23.3 216.2,24 212.7,24.5 209.2,24.6 206,24.3 202.5,23.7 199.2,22.8 195.8,21.5 192.7,19.9 189.6,18 186.9,15.9 184.4,13.5 182.2,11 180.1,8.1 178.3,5 176.9,1.9 175.8,-1.2 174.9,-4.6 174.5,-7.9 174.3,-11.4 174.5,-14.8 175.1,-18.1 176,-21.4 177.2,-24.5 178.7,-27.4 180.6,-30.2 182.7,-32.7 185.1,-35.1 187.7,-37.1 190.6,-38.9 193.6,-40.4Z"/>
<path fill="#070706" d="M199.4,-40.3 202.3,-40.9 205.4,-41.2 208.5,-41.2 211.4,-40.9 214.4,-40.4 217.3,-39.5 220.2,-38.4 222.9,-37.1 225.4,-35.5 227.9,-33.7 230.3,-31.6 232.5,-29.3 234.4,-26.8 236.1,-24.1 237.5,-21.4 238.7,-18.5 239.6,-15.4 240.1,-12.5 240.4,-9.6 240.4,-6.5 240.2,-3.5 239.6,-0.6 238.8,2.1 237.6,5 236.3,7.5 234.6,10 232.7,12.3 230.6,14.4 228.3,16.3 226,17.8 223.3,19.2 220.6,20.3 217.5,21.2 214.4,21.7 211.4,22 208.1,21.9 204.8,21.5 201.5,20.7 198.5,19.7 195.6,18.4 192.7,16.8 190,14.9 187.5,12.7 185.2,10.4 183.2,7.9 181.5,5.2 179.9,2.3 178.7,-0.8 177.8,-3.9 177.2,-7.1 176.9,-10.2 177,-13.5 177.3,-16.6 178,-19.6 179.1,-22.7 180.3,-25.4 181.9,-28.1 183.8,-30.6 185.9,-32.9 188.2,-34.9 190.8,-36.7 193.6,-38.3 196.3,-39.4Z"/>
<path fill="#090908" d="M199.4,-38.9 202.1,-39.5 205,-39.8 207.9,-39.9 210.8,-39.7 213.7,-39.3 216.4,-38.6 219.1,-37.6 221.8,-36.3 224.5,-34.8 226.8,-33.1 229,-31.2 231.1,-29.1 232.9,-26.8 234.6,-24.3 236,-21.8 237.1,-19.1 238,-16.4 238.7,-13.5 239,-10.6 239.1,-7.7 238.9,-5 238.5,-2.1 237.7,0.6 236.7,3.3 235.5,5.8 234,8.1 232.4,10.2 230.4,12.3 228.3,14.1 226,15.7 223.5,17.1 221,18.2 218.1,19.1 215.2,19.7 212.3,20 209.2,20 206.2,19.7 203.3,19.2 200.2,18.2 197.3,17 194.4,15.5 191.9,13.8 189.4,11.8 187.3,9.7 185.3,7.3 183.6,4.8 182.1,2.1 180.8,-0.8 179.9,-3.7 179.2,-6.5 178.9,-9.6 178.8,-12.7 179.1,-15.8 179.7,-18.7 180.6,-21.6 181.7,-24.3 183.1,-26.8 184.9,-29.3 186.9,-31.6 189,-33.5 191.3,-35.2 193.8,-36.7 196.5,-37.9Z"/>
<path fill="#0b0c09" d="M199.4,-37.6 201.9,-38.3 204.6,-38.7 207.3,-38.8 210.2,-38.7 212.9,-38.3 215.6,-37.7 218.1,-36.9 220.8,-35.7 223.3,-34.3 225.6,-32.8 227.8,-31 229.9,-29 231.7,-26.8 233.3,-24.5 234.7,-22 235.9,-19.5 236.8,-16.8 237.5,-14.1 237.8,-11.4 238,-8.7 237.9,-6 237.5,-3.3 236.8,-0.6 235.9,1.9 234.8,4.2 233.4,6.5 231.9,8.7 230.1,10.7 228.1,12.4 226,13.9 223.7,15.3 221.2,16.5 218.5,17.4 215.8,18 212.9,18.4 210,18.5 207.1,18.2 204.2,17.7 201.3,16.9 198.7,15.9 196,14.5 193.5,12.9 191.1,11.1 188.9,9.1 186.9,6.7 185.2,4.4 183.8,1.9 182.5,-0.8 181.6,-3.5 180.9,-6.4 180.5,-9.2 180.4,-12.1 180.6,-15 181,-17.7 181.7,-20.4 182.8,-23.1 184.1,-25.6 185.6,-27.9 187.5,-30.2 189.5,-32.2 191.7,-33.9 194.2,-35.4 196.7,-36.7Z"/>
<path fill="#0e0e0b" d="M200,-36.7 202.5,-37.3 205.2,-37.7 207.7,-37.8 210.4,-37.7 213.1,-37.3 215.6,-36.8 218.1,-35.9 220.6,-34.8 222.9,-33.5 225,-32.1 227.2,-30.4 229.1,-28.5 230.9,-26.4 232.4,-24.3 233.7,-22 234.9,-19.5 235.8,-17 236.4,-14.4 236.8,-11.8 237,-9.2 236.9,-6.5 236.5,-4 236,-1.5 235.1,1 234,3.3 232.7,5.6 231.2,7.6 229.5,9.5 227.5,11.3 225.4,12.8 223.3,14.1 221,15.1 218.5,16 215.8,16.6 213.1,17 210.2,17.1 207.3,16.9 204.6,16.4 201.9,15.6 199.2,14.6 196.7,13.3 194.2,11.8 192,10 190,8.1 188.1,6 186.4,3.7 185,1.2 183.8,-1.3 182.9,-4 182.2,-6.7 181.8,-9.6 181.7,-12.3 181.9,-15 182.4,-17.7 183.1,-20.4 184.1,-22.9 185.3,-25.2 186.9,-27.5 188.6,-29.7 190.6,-31.5 192.7,-33.2 195,-34.6 197.5,-35.8Z"/>
<path fill="#10100d" d="M200,-35.7 202.3,-36.3 204.8,-36.8 207.3,-37 209.8,-36.9 212.3,-36.6 214.8,-36.1 217.3,-35.3 219.6,-34.4 222,-33.2 224.1,-31.8 226.2,-30.2 228.1,-28.3 229.9,-26.4 231.4,-24.3 232.7,-22.2 233.8,-19.8 234.7,-17.5 235.4,-15 235.8,-12.5 236.1,-10 236,-7.5 235.7,-5 235.2,-2.5 234.5,-0.2 233.5,2.1 232.3,4.2 230.8,6.4 229.3,8.2 227.5,9.8 225.5,11.4 223.5,12.6 221.2,13.8 218.7,14.7 216.2,15.4 213.7,15.7 211,15.9 208.3,15.7 205.6,15.3 203.1,14.7 200.4,13.7 197.9,12.5 195.6,11.2 193.5,9.6 191.3,7.7 189.4,5.6 187.8,3.5 186.4,1.2 185.1,-1.3 184.2,-3.9 183.5,-6.5 183.1,-9.2 182.9,-11.9 183.1,-14.6 183.4,-17.1 184.1,-19.6 185,-22.2 186.2,-24.5 187.5,-26.6 189.1,-28.5 190.9,-30.4 193.1,-32.2 195.2,-33.5 197.5,-34.7Z"/>
<path fill="#12130f" d="M200.8,-35 203.1,-35.6 205.6,-36 207.9,-36.1 210.4,-36.1 212.9,-35.7 215.2,-35.2 217.5,-34.4 219.8,-33.4 222,-32.3 224.1,-30.9 226,-29.3 227.9,-27.5 229.5,-25.7 230.9,-23.7 232.1,-21.6 233.2,-19.3 234.1,-17 234.7,-14.6 235.1,-12.3 235.2,-9.8 235.2,-7.3 234.9,-5 234.3,-2.7 233.6,-0.4 232.6,1.7 231.4,3.9 230,5.8 228.5,7.5 226.8,9.1 224.9,10.6 222.7,11.9 220.6,12.9 218.3,13.7 215.8,14.3 213.3,14.7 210.6,14.8 208.1,14.6 205.6,14.2 203.1,13.5 200.6,12.6 198.3,11.5 196,10 193.8,8.4 191.9,6.7 190.1,4.6 188.5,2.5 187.1,0.2 186,-2.1 185.1,-4.6 184.5,-7.1 184.1,-9.8 184,-12.3 184.2,-14.8 184.6,-17.3 185.3,-19.8 186.2,-22.2 187.4,-24.5 188.8,-26.6 190.4,-28.5 192.1,-30.2 194,-31.7 196.1,-33 198.5,-34.2Z"/>
<path fill="#141511" d="M201,-34.2 203.3,-34.8 205.6,-35.2 207.9,-35.4 210.2,-35.3 212.5,-35 214.8,-34.5 217.1,-33.8 219.5,-32.8 221.6,-31.7 223.5,-30.4 225.4,-28.9 227.2,-27.3 228.8,-25.4 230.2,-23.5 231.4,-21.4 232.4,-19.3 233.3,-17 233.9,-14.6 234.3,-12.3 234.4,-10 234.4,-7.7 234.1,-5.4 233.6,-3.1 232.9,-1 231.9,1.2 230.8,3.1 229.5,5 228,6.7 226.3,8.3 224.5,9.7 222.5,10.9 220.4,11.9 218.1,12.7 215.8,13.3 213.3,13.6 210.8,13.7 208.3,13.6 205.8,13.2 203.3,12.5 201,11.6 198.7,10.5 196.5,9.2 194.6,7.7 192.7,6 190.9,4 189.4,2 188.1,-0.2 187,-2.5 186.2,-4.8 185.5,-7.3 185.2,-9.6 185.1,-12.1 185.2,-14.6 185.5,-17 186.1,-19.3 187,-21.6 188,-23.7 189.4,-25.8 190.9,-27.7 192.7,-29.5 194.6,-31 196.5,-32.3 198.7,-33.3Z"/>
<path fill="#171713" d="M201.2,-33.5 203.3,-34 205.6,-34.5 207.7,-34.6 210,-34.6 212.3,-34.3 214.6,-33.9 216.8,-33.2 218.9,-32.4 221,-31.3 222.9,-30 224.9,-28.5 226.5,-27 228.1,-25.2 229.5,-23.3 230.6,-21.4 231.7,-19.3 232.5,-17.1 233.1,-14.8 233.5,-12.7 233.7,-10.4 233.6,-8.1 233.4,-6 232.9,-3.7 232.2,-1.5 231.3,0.6 230.2,2.5 229,4.2 227.5,5.9 226,7.4 224.3,8.7 222.3,9.9 220.4,10.9 218.3,11.7 216,12.3 213.7,12.6 211.2,12.8 208.7,12.6 206.4,12.3 204,11.7 201.7,10.9 199.6,9.9 197.5,8.6 195.6,7.2 193.6,5.5 191.9,3.7 190.4,1.7 189.1,-0.4 188.1,-2.5 187.2,-4.8 186.6,-7.1 186.2,-9.4 186,-11.9 186.1,-14.4 186.4,-16.8 187,-19.1 187.8,-21.2 188.9,-23.3 190.1,-25.2 191.5,-27.1 193.1,-28.7 195,-30.2 196.9,-31.5 199,-32.6Z"/>
<path fill="#191a15" d="M202.7,-33.1 204.8,-33.6 206.9,-33.9 209.1,-33.9 211.4,-33.8 213.7,-33.4 215.8,-32.8 219.8,-31.2 221.8,-30 223.6,-28.7 225.2,-27.3 226.9,-25.6 228.3,-23.9 229.6,-22 230.6,-20 231.5,-17.9 232.2,-15.8 232.7,-13.7 232.9,-11.6 233,-9.2 232.8,-7.1 232.5,-5 231.9,-2.9 231.2,-1 230.2,1 229.1,2.7 227.8,4.4 226.3,6 224.7,7.4 222.9,8.6 221,9.6 219.1,10.5 217,11.1 214.6,11.6 212.3,11.8 210,11.8 207.7,11.6 205.4,11.1 203.1,10.4 201,9.5 198.8,8.4 196.9,7.1 195,5.6 193.3,3.9 191.8,2.1 190.5,0.2 189.3,-1.9 188.4,-4 187.7,-6.2 187.2,-8.5 187,-10.8 186.9,-13.1 187.1,-15.4 187.6,-17.7 188.2,-19.8 189.1,-22 190.2,-23.9 191.5,-25.8 192.9,-27.4 194.6,-28.9 196.5,-30.4 198.5,-31.5 200.6,-32.4Z"/>
<path fill="#1b1c17" d="M202.1,-32.2 206.2,-33.1 208.3,-33.3 210.4,-33.2 212.5,-33 214.6,-32.5 218.7,-31 222.3,-28.9 224.1,-27.5 225.7,-26 227.2,-24.3 228.5,-22.5 229.6,-20.6 230.5,-18.7 231.8,-14.6 232.1,-12.5 232.3,-10.4 232.2,-8.3 232,-6.2 231.5,-4 230.8,-2.1 230,-0.2 229,1.5 227.7,3.2 226.4,4.8 223.3,7.3 221.6,8.4 219.6,9.3 217.5,10.1 215.4,10.6 213.3,10.9 211,11 208.7,10.9 206.5,10.5 204.4,10 202.3,9.2 200.2,8.2 198.3,7 196.4,5.6 194.7,4 193.1,2.3 191.8,0.6 190.6,-1.3 189.6,-3.5 188.8,-5.6 188.3,-7.7 187.9,-9.8 187.8,-12.1 187.9,-14.4 188.2,-16.6 188.7,-18.7 189.5,-20.8 190.5,-22.7 191.7,-24.7 193.1,-26.4 194.6,-27.9 196.3,-29.3 198.1,-30.4 200,-31.4Z"/>
<path fill="#1e1e19" d="M202.9,-31.7 204.8,-32.2 206.9,-32.5 211,-32.5 215,-31.8 218.9,-30.3 220.8,-29.2 222.5,-28 225.6,-25.2 228.2,-21.8 230.1,-18.1 231.2,-14.3 231.6,-10.2 231.3,-6.2 230.1,-2.3 228.3,1.2 227.2,2.7 225.8,4.2 224.3,5.6 222.7,6.8 221,7.8 219.1,8.7 217,9.4 214.8,9.9 212.7,10.1 210.6,10.2 208.5,10 206.4,9.6 204.2,9 202.1,8.2 200.2,7.2 198.3,6 196.5,4.6 194.9,3.1 193.5,1.4 192.2,-0.4 191.1,-2.3 190.2,-4.2 189.5,-6.4 189,-8.5 188.7,-10.6 188.6,-12.7 188.7,-14.8 189.1,-17 189.7,-19.1 190.5,-21 191.5,-22.9 192.6,-24.7 194,-26.3 195.5,-27.7 197.3,-29.1 199,-30.1 201,-31.1Z"/>
<path fill="#20211a" d="M204.4,-31.5 208.3,-32 212.3,-31.7 216.2,-30.7 219.8,-29.1 223.1,-26.8 226,-23.8 228.3,-20.4 229.9,-16.8 230.8,-12.9 231,-9.1 230.4,-5.2 229,-1.5 227,1.7 224.5,4.5 221.3,6.7 217.7,8.3 215.8,8.9 213.7,9.2 211.6,9.4 209.4,9.3 205.4,8.5 203.3,7.8 201.3,6.9 199.4,5.8 197.7,4.5 196.1,3.1 194.6,1.5 193.3,-0.2 192.2,-1.9 191.2,-3.9 190.5,-5.8 189.9,-7.7 189.6,-9.8 189.4,-11.9 189.5,-14.1 189.7,-16.2 190.2,-18.1 190.9,-20 191.8,-22 192.9,-23.7 194.1,-25.2 195.6,-26.8 197.1,-28.1 198.8,-29.2 200.6,-30.1 202.5,-30.9Z"/>
<path fill="#22231c" d="M202.9,-30.3 206.5,-31.2 210.4,-31.3 214.3,-30.7 217.9,-29.4 221.4,-27.4 224.3,-24.9 226.7,-22 228.6,-18.5 229.8,-14.8 230.3,-11 230.1,-7.1 229.1,-3.5 227.5,-0.2 225.2,2.7 222.3,5.2 219.1,7 217.1,7.7 215.2,8.2 213.3,8.5 211.2,8.6 209.1,8.5 207.1,8.1 203.3,6.9 201.3,6 199.6,5 196.4,2.3 193.8,-0.8 192.8,-2.5 191.8,-4.4 190.6,-8.3 190.3,-10.2 190.2,-12.3 190.5,-16.2 191,-18.1 191.7,-20 192.5,-21.8 193.6,-23.5 194.9,-25 196.2,-26.4 197.7,-27.6 199.3,-28.7 201,-29.6Z"/>
<path fill="#24251e" d="M203.5,-29.8 207.1,-30.6 210.8,-30.7 214.4,-30 217.9,-28.8 221.2,-26.8 224.1,-24.3 226.4,-21.4 228.1,-18.1 229.3,-14.4 229.7,-10.8 229.4,-7.1 228.5,-3.7 226.8,-0.4 224.6,2.3 221.9,4.6 218.7,6.4 215,7.5 211.2,7.8 207.3,7.4 205.4,6.9 203.5,6.2 200,4.3 196.9,1.7 194.4,-1.3 192.5,-4.8 191.8,-6.7 191.3,-8.7 190.9,-12.5 191,-14.4 191.3,-16.4 191.8,-18.3 192.5,-20 194.4,-23.3 195.6,-24.8 196.9,-26.1 198.5,-27.3 200,-28.3Z"/>
<path fill="#272820" d="M204,-29.4 207.5,-30 211,-30.1 214.4,-29.4 217.9,-28.1 221,-26.2 223.7,-23.9 225.9,-21 227.7,-17.7 228.7,-14.3 229.1,-10.8 228.8,-7.3 227.8,-3.9 226.2,-0.8 224.1,1.9 221.4,4.1 218.3,5.7 216.6,6.4 214.6,6.8 211,7.1 207.3,6.6 203.7,5.5 200.2,3.5 197.3,1.1 194.9,-1.9 193.1,-5.4 192,-9.1 191.7,-11 191.7,-12.9 192.1,-16.6 193.3,-20 195.1,-23.1 197.6,-25.8 200.6,-27.9 202.3,-28.7Z"/>
<path fill="#292a22" d="M204.4,-28.8 207.7,-29.4 211.2,-29.5 214.6,-28.8 217.9,-27.5 220.9,-25.6 223.5,-23.2 225.6,-20.4 227.2,-17.3 228.2,-14.1 228.5,-10.6 228.2,-7.3 227.2,-4 225.6,-1.1 223.5,1.5 220.8,3.6 217.9,5.1 214.4,6.1 210.8,6.3 207.1,5.8 203.7,4.6 200.4,2.7 197.7,0.4 195.4,-2.5 193.7,-5.8 192.7,-9.2 192.4,-12.9 192.9,-16.6 194,-19.8 195.8,-22.9 198.2,-25.4 201.2,-27.5Z"/>
<path fill="#2b2c24" d="M204.8,-28.3 208.1,-28.9 211.4,-28.8 214.6,-28.2 217.7,-27 220.6,-25.1 223.1,-22.8 225.1,-20.2 226.7,-17.1 227.6,-13.9 227.9,-10.6 227.5,-7.3 226.6,-4.2 225,-1.3 222.9,1.1 220.4,3.1 217.5,4.5 214.3,5.4 210.8,5.6 207.3,5.1 203.9,3.9 200.8,2.1 198.1,-0.2 196,-3 194.3,-6.2 193.4,-9.6 193.1,-13.1 193.5,-16.4 194.7,-19.6 196.4,-22.5 198.8,-25 201.6,-27Z"/>
<path fill="#2e2f26" d="M205.4,-27.8 208.5,-28.3 211.6,-28.2 214.6,-27.6 217.7,-26.3 220.4,-24.6 222.8,-22.3 224.8,-19.6 226.2,-16.8 227,-13.7 227.3,-10.6 226.9,-7.5 226,-4.4 224.5,-1.7 222.5,0.6 220,2.5 217.1,3.9 213.9,4.7 210.6,4.9 207.3,4.4 204,3.2 201,1.4 198.5,-0.9 196.4,-3.7 194.9,-6.7 194,-10 193.8,-13.5 194.4,-16.8 195.5,-19.8 197.3,-22.5 199.6,-24.9 202.3,-26.6Z"/>
<path fill="#303128" d="M204.2,-26.8 207.1,-27.5 210.2,-27.7 213.3,-27.3 216.2,-26.4 218.9,-25 221.4,-23 223.5,-20.6 225.1,-17.9 226.1,-15 226.6,-11.9 226.5,-8.9 225.9,-6 224.7,-3.3 222.9,-0.9 220.7,1.2 218.1,2.7 215,3.8 211.9,4.2 208.7,4 205.6,3.1 202.7,1.7 200,-0.4 197.9,-2.7 196.1,-5.6 195,-8.7 194.6,-11.9 194.7,-15 195.5,-18.1 196.9,-20.9 198.9,-23.3 201.3,-25.3Z"/>
<path fill="#32332a" d="M204.8,-26.3 207.5,-27 210.4,-27.1 213.3,-26.7 216.2,-25.8 218.9,-24.3 221.2,-22.4 223.1,-20.1 224.6,-17.5 225.6,-14.6 226,-11.8 225.9,-8.9 225.2,-6.1 224,-3.5 222.3,-1.2 220.2,0.7 217.7,2.2 214.8,3.1 211.8,3.5 208.7,3.2 205.6,2.3 202.9,1 200.4,-1 198.3,-3.4 196.7,-6.2 195.6,-9.2 195.2,-12.3 195.5,-15.4 196.3,-18.3 197.7,-20.8 199.6,-23.1 202.1,-25Z"/>
<path fill="#34362b" d="M205,-25.7 207.7,-26.4 210.4,-26.5 213.3,-26.1 216,-25.2 218.5,-23.9 220.8,-22 222.6,-19.8 224,-17.3 225,-14.6 225.4,-11.8 225.3,-9.1 224.6,-6.4 223.5,-3.9 221.9,-1.7 219.8,0.1 217.5,1.5 214.6,2.4 211.8,2.8 208.9,2.6 206,1.7 203.3,0.4 200.8,-1.5 198.8,-3.8 197.4,-6.4 196.4,-9.2 196,-12.1 196.1,-15 197,-17.9 198.3,-20.4 200.2,-22.7 202.5,-24.5Z"/>
<path fill="#37382d" d="M205.6,-25.2 208.1,-25.8 210.8,-25.9 213.5,-25.5 216,-24.6 218.3,-23.3 220.4,-21.5 222.2,-19.5 223.6,-17 224.4,-14.4 224.8,-11.8 224.7,-9.1 224,-6.5 222.9,-4.2 221.3,-2.1 219.3,-0.3 217,1 214.3,1.8 211.6,2.1 208.7,1.8 206,1 203.4,-0.4 201.2,-2.2 199.3,-4.4 197.9,-6.9 197,-9.6 196.7,-12.5 196.9,-15.2 197.7,-17.9 199,-20.3 200.8,-22.3 203.1,-24.1Z"/>
<path fill="#393a2f" d="M206.2,-24.7 208.7,-25.2 211.2,-25.2 213.7,-24.8 216.2,-23.8 218.5,-22.4 220.4,-20.7 222,-18.7 223.2,-16.4 223.9,-13.9 224.2,-11.4 224,-8.9 223.2,-6.4 222.1,-4.2 220.5,-2.3 218.6,-0.8 216.4,0.4 213.9,1.1 211.2,1.3 208.5,1 206,0.2 203.6,-1.2 201.5,-2.9 199.8,-5 198.4,-7.5 197.7,-10 197.4,-12.7 197.7,-15.4 198.5,-17.9 199.8,-20.2 201.6,-22.2 203.8,-23.7Z"/>
<path fill="#3b3d31" d="M205.8,-23.9 208.1,-24.5 210.6,-24.6 213.1,-24.3 215.4,-23.5 217.5,-22.4 219.5,-20.8 221.1,-18.9 222.3,-16.8 223.1,-14.4 223.5,-12.1 223.4,-9.6 222.9,-7.3 221.9,-5.2 220.5,-3.3 218.8,-1.7 216.8,-0.5 214.4,0.3 211.9,0.6 209.4,0.4 206.9,-0.2 204.6,-1.3 202.5,-2.9 200.8,-4.9 199.4,-7.1 198.5,-9.6 198.1,-12.1 198.3,-14.6 198.9,-17 200,-19.3 201.6,-21.2 203.5,-22.7Z"/>
<path fill="#3e3f33" d="M206.4,-23.3 208.5,-23.9 210.8,-24 213.1,-23.6 215.2,-22.9 217.3,-21.7 219.1,-20.2 220.6,-18.5 221.8,-16.4 222.5,-14.3 222.8,-11.9 222.7,-9.6 222.2,-7.4 221.2,-5.4 219.8,-3.7 218.1,-2.2 216.2,-1.1 213.9,-0.4 211.6,-0.1 209.2,-0.3 206.9,-1 204.8,-2.1 202.8,-3.7 201.2,-5.6 200,-7.7 199.2,-10 198.9,-12.5 199.1,-14.8 199.8,-17.1 200.9,-19.3 202.4,-21 204.2,-22.3Z"/>
<path fill="#404135" d="M206.2,-22.5 208.3,-23.1 210.4,-23.3 212.5,-23.1 214.6,-22.4 216.6,-21.5 218.3,-20.1 219.8,-18.5 221,-16.6 221.7,-14.6 222.1,-12.5 222.1,-10.4 221.7,-8.3 220.9,-6.4 219.7,-4.6 218.1,-3.1 216.4,-2 214.3,-1.2 212.1,-0.9 209.8,-1 207.7,-1.5 205.6,-2.5 203.7,-3.9 202.1,-5.6 200.9,-7.5 200.1,-9.6 199.7,-11.9 199.7,-14.3 200.3,-16.4 201.2,-18.3 202.5,-20 204.2,-21.5Z"/>
<path fill="#424437" d="M207.3,-22.1 209.2,-22.5 211.4,-22.5 213.3,-22.2 215.2,-21.4 217,-20.4 218.5,-19 219.8,-17.3 220.6,-15.6 221.2,-13.7 221.4,-11.8 221.3,-9.8 220.8,-7.9 219.9,-6.2 218.6,-4.6 217.1,-3.4 215.4,-2.5 213.5,-1.9 211.4,-1.7 209.2,-1.9 207.1,-2.6 205.3,-3.7 203.7,-5 202.3,-6.7 201.2,-8.7 200.6,-10.8 200.4,-12.9 200.7,-15 201.3,-16.9 202.4,-18.7 203.8,-20.2 205.5,-21.4Z"/>
<path fill="#444639" d="M207.5,-21.4 209.2,-21.8 211.2,-21.8 212.9,-21.5 214.6,-20.9 216.2,-20 217.7,-18.8 218.9,-17.3 219.9,-15.6 220.4,-13.9 220.7,-11.9 220.6,-10 220.1,-8.3 219.3,-6.7 218.1,-5.2 216.8,-4.1 215.2,-3.3 213.3,-2.7 211.4,-2.5 209.4,-2.7 207.5,-3.4 205.8,-4.3 204.2,-5.6 203,-7.1 202,-8.9 201.4,-10.8 201.3,-12.7 201.5,-14.6 202,-16.4 202.9,-18 204.2,-19.5 205.8,-20.6Z"/>
<path fill="#47483b" d="M207.9,-20.6 209.4,-21 211.2,-21 212.9,-20.7 214.4,-20.2 216,-19.2 217.3,-18.1 218.4,-16.8 219.2,-15.2 219.7,-13.7 219.9,-11.9 219.8,-10.2 219.3,-8.7 218.5,-7.1 217.5,-5.9 216.3,-4.8 214.8,-4.1 213.1,-3.5 211.4,-3.4 209.6,-3.6 207.9,-4.1 206.3,-5 204.9,-6.2 203.7,-7.7 202.8,-9.2 202.3,-11 202.1,-12.7 202.3,-14.4 202.9,-16.2 203.7,-17.6 204.8,-18.9 206.2,-19.9Z"/>
<path fill="#494b3c" d="M207.7,-19.6 209.1,-20 210.6,-20.2 212.1,-20 213.7,-19.6 215.1,-18.9 216.3,-17.9 217.4,-16.8 218.2,-15.4 218.7,-14.1 219,-12.5 219,-11 218.7,-9.4 218.1,-8.1 217.1,-6.8 216,-5.8 214.8,-5.1 213.3,-4.5 211.8,-4.3 210.2,-4.4 208.7,-4.8 207.1,-5.6 205.8,-6.5 204.8,-7.7 203.9,-9.1 203.3,-10.6 203.1,-12.1 203.1,-13.7 203.5,-15.2 204.2,-16.8 205.1,-17.9 206.4,-18.9Z"/>
<path fill="#4b4d3e" d="M207.9,-18.7 209.1,-19.1 210.4,-19.2 211.8,-19.2 213.1,-18.8 214.3,-18.3 215.4,-17.5 216.4,-16.5 217.1,-15.4 217.7,-14.3 218,-12.9 218.1,-11.6 217.9,-10.2 217.4,-9.1 216.7,-7.9 215.8,-6.9 214.6,-6.1 213.3,-5.6 211.9,-5.4 210.6,-5.4 209.2,-5.7 207.9,-6.3 206.7,-7.1 205.7,-8.1 205,-9.2 204.4,-10.6 204.1,-11.9 204.1,-13.3 204.4,-14.6 204.8,-15.8 205.6,-17 206.7,-17.9Z"/>
<path fill="#4d4f40" d="M208.9,-17.8 209.8,-18.1 211,-18.2 212.1,-18 213.3,-17.6 215.1,-16.4 215.9,-15.4 216.5,-14.4 216.8,-13.3 217,-12.1 216.9,-11 216.6,-10 216.2,-9.1 215.4,-8.1 214.6,-7.5 213.7,-6.9 212.5,-6.6 211.4,-6.5 210.2,-6.6 209.1,-7 208,-7.5 207.1,-8.3 206.4,-9.2 205.8,-10.2 205.4,-11.4 205.2,-12.5 205.3,-13.7 205.7,-14.8 206.2,-15.8 206.9,-16.7 207.8,-17.3Z"/>
<path fill="#505242" d="M209.2,-16.5 211,-16.9 212.7,-16.5 214.3,-15.4 215.2,-14.1 215.6,-12.5 215.5,-10.8 214.6,-9.3 213.3,-8.3 211.6,-7.9 209.8,-8.1 208.3,-9.1 207.1,-10.6 206.6,-12.3 206.9,-14.1 207.8,-15.6Z"/>
<path fill="#525444" d="M209.8,-14.7 210.8,-15 211.8,-14.9 212.6,-14.4 213.3,-13.7 213.7,-12.7 213.7,-11.8 213.3,-10.8 212.7,-10.2 211.8,-9.9 210.8,-9.9 209.8,-10.3 209.1,-11 208.6,-11.9 208.6,-13.1 209.1,-14Z"/>
</g>
</g>
</g>
        <linearGradient id="stkA" x1="0" y1="0" x2="0" y2="1">
<stop offset="0" stop-color="#c39759"/><stop offset="0.12" stop-color="#c89c5e"/><stop offset="0.35" stop-color="#bd8f52"/><stop offset="0.58" stop-color="#94703c"/><stop offset="0.76" stop-color="#42300f"/><stop offset="0.9" stop-color="#0e0a03"/><stop offset="1" stop-color="#060401"/>
</linearGradient>
<linearGradient id="stkB" x1="0" y1="0" x2="0" y2="1">
<stop offset="0" stop-color="#7c5e34"/><stop offset="0.14" stop-color="#bd9050"/><stop offset="0.45" stop-color="#d6a766"/><stop offset="0.78" stop-color="#c2944f"/><stop offset="0.92" stop-color="#8a683a"/><stop offset="1" stop-color="#5a4020"/>
</linearGradient>
<linearGradient id="stkC" x1="0" y1="0" x2="0" y2="1">
<stop offset="0" stop-color="#a88046"/><stop offset="0.2" stop-color="#bc9054"/><stop offset="0.55" stop-color="#b88c50"/><stop offset="0.78" stop-color="#86622f"/><stop offset="0.91" stop-color="#2c1e0b"/><stop offset="1" stop-color="#0c0803"/>
</linearGradient>
      </defs>
      <!-- back axis lines -->
      <line x1="205.2" y1="99.9" x2="373" y2="366" stroke="#ff2020" stroke-opacity="0.5" stroke-width="1.1"/>
      <line x1="509.7" y1="86.2" x2="374.7" y2="366.3" stroke="#2020ff" stroke-opacity="0.5" stroke-width="1.1"/>
      <!-- sticks behind spheres -->
<g transform="translate(218.3,188.2) rotate(31.52)"><path d="M3.4 -4.40 H119.5 V4.40 H3.4 A3.4 4.40 0 0 1 3.4 -4.40 Z" fill="url(#stkA)"/></g>
<g transform="translate(394.8,254.1) rotate(-31.05)"><path d="M0.0 -4.40 H151.6 V4.40 H0.0 Z" fill="url(#stkB)"/></g>
<g transform="translate(366.9,326.0) rotate(81.02)"><path d="M0.0 -4.15 H89.1 V4.15 H0.0 Z" fill="url(#stkA)"/></g>
<g transform="translate(221.3,561.2) rotate(-31.32)"><path d="M0.0 -4.20 H150.6 V4.20 H0.0 Z" fill="url(#stkB)"/></g>
<g transform="translate(432.0,450.2) rotate(-7.54)"><path d="M0.0 -4.20 H15.1 A4.0 4.20 0 0 1 15.1 4.20 H0.0 Z" fill="url(#stkC)"/></g>
      <!-- spheres -->
      <use href="#ball" x="358.1" y="278.3"/>
      <use href="#ball" x="387.7" y="458.9"/>
      <!-- green axis over spheres -->
      <line x1="284.3" y1="199.2" x2="370.9" y2="364.5" stroke="#10f010" stroke-opacity="0.6" stroke-width="1.1"/>
      <!-- sticks in front -->
<g transform="translate(299.0,288.7) rotate(-10.08)"><path d="M-0.1 -4.25 H45.5 A3.0 4.25 0 0 1 45.5 4.25 H-0.1 A3.8 4.25 0 0 1 -0.1 -4.25 Z" fill="url(#stkC)"/><ellipse cx="-0.1" cy="0" rx="3.8" ry="4.05" fill="#ae8246"/></g>
<g transform="translate(422.9,482.4) rotate(32.46)"><path d="M0.5 -4.30 L121.8 -3.50 A2.8 3.50 0 0 1 121.8 3.50 L0.5 4.30 A3.0 4.30 0 0 1 0.5 -4.30 Z" fill="url(#stkA)"/><ellipse cx="121.8" cy="0" rx="2.8" ry="3.30" fill="#a27a42"/></g>
    </svg>
  </div>

  <div id="bar">
    <svg id="barsvg" width="731" height="51" viewBox="0 683 731 51">
      <defs>
        <clipPath id="pillclip"><rect x="144.5" y="693" width="441" height="28" rx="14"/></clipPath>
        <radialGradient id="glow"><stop offset="0" stop-color="#fff" stop-opacity="0.6"/><stop offset="0.3" stop-color="#fff" stop-opacity="0.42"/><stop offset="0.6" stop-color="#fff" stop-opacity="0.17"/><stop offset="0.85" stop-color="#fff" stop-opacity="0.04"/><stop offset="1" stop-color="#fff" stop-opacity="0"/></radialGradient>
        <linearGradient id="refl" x1="0" y1="0" x2="0" y2="1"><stop offset="0" stop-color="#8c8686" stop-opacity="0.75"/><stop offset="1" stop-color="#8c8686" stop-opacity="0.45"/></linearGradient>
      </defs>
      <!-- reflection -->
      <rect x="143.5" y="725.2" width="443" height="33" rx="16.5" fill="url(#refl)" stroke="#c6c2c2" stroke-width="1.6"/>
      <!-- pill -->
      <rect x="143.2" y="691.65" width="443.6" height="30.7" rx="15.35" fill="#2a0909" stroke="#fff" stroke-width="2.3"/>
      <g clip-path="url(#pillclip)">
        <rect x="144" y="693" width="442" height="28" fill="#2a0909"/>
        <path d="M144 693 H586 V704 Q584 708 570 708 H160 Q146 708 144 704 Z" fill="#5e4e4e"/>
      </g>
      <!-- icons -->
      <circle cx="166" cy="708" r="13" fill="url(#glow)"/>
      <path d="M161.9 700.5 L172.1 709.7 L169.3 711 L165.3 708 L164.9 712.7 L161.9 714.1 Z" fill="#fff"/>
      <g opacity="0.99" fill="#e4dede" stroke="#e4dede" stroke-width="0.25" font-family="Liberation Sans, sans-serif" font-size="18">
        <text x="189.5" y="714">C</text>
        <text x="222" y="714">O</text>
        <text x="254.5" y="714">N</text>
        <text x="286.8" y="714">H</text>
        <text x="315.5" y="714">X</text>
      </g>
      <path d="M329.5 709.3 H336 L332.75 714.6 Z" fill="#e6e1e1"/>
      <!-- hexagon -->
      <path fill-rule="evenodd" fill="#e6e1e1" d="M356.7 698.8 L364 703 L364 711.2 L356.7 715.3 L349.4 711.2 L349.4 703 Z M356.7 702.3 A4.7 4.7 0 1 0 356.7 711.7 A4.7 4.7 0 1 0 356.7 702.3 Z"/>
      <!-- snowflake -->
      <g id="flake" stroke="#e6e1e1" stroke-width="1.25" stroke-linecap="round" fill="none" transform="translate(388.7,707.4) rotate(90)">
        <g id="arm"><path d="M0 0 V-8.4 M0 -5 L-2.6 -7.6 M0 -5 L2.6 -7.6 M0 -2.4 L-1.6 -3.6 M0 -2.4 L1.6 -3.6"/></g>
        <use href="#arm" transform="rotate(60)"/>
        <use href="#arm" transform="rotate(120)"/>
        <use href="#arm" transform="rotate(180)"/>
        <use href="#arm" transform="rotate(240)"/>
        <use href="#arm" transform="rotate(300)"/>
      </g>
      <!-- parallelogram -->
      <path d="M413.8 704.3 L427.2 701.1 L427.2 709.6 L413.8 712.8 Z" fill="none" stroke="#e2dcdc" stroke-width="1.7"/>
      <!-- star -->
      <path fill="#e6e1e1" d="M500.5 698.8 L502.6 705 L509 705.1 L503.9 709 L505.8 715.2 L500.5 711.5 L495.2 715.2 L497.1 709 L492 705.1 L498.4 705 Z"/>
      <!-- box -->
      <g stroke="#d9d2d2" fill="none">
        <rect x="525.2" y="698.7" width="15.6" height="15.6" stroke-width="1.6"/>
        <rect x="529.8" y="703.3" width="6.9" height="6.9" stroke-width="1.2"/>
        <path d="M525.2 698.7 L529.8 703.3 M540.8 698.7 L536.7 703.3 M525.2 714.3 L529.8 710.2 M540.8 714.3 L536.7 710.2" stroke-width="1"/>
      </g>
      <!-- dots -->
      <circle cx="559.2" cy="702.5" r="3.3" fill="#e6e1e1"/>
      <circle cx="568.2" cy="702.5" r="2.6" fill="none" stroke="#e6e1e1" stroke-width="1.1"/>
      <circle cx="559.2" cy="711.8" r="3.3" fill="#e6e1e1"/>
      <circle cx="568.2" cy="711.8" r="3.3" fill="#e6e1e1"/>
    </svg>
  </div>

  <div id="panel">
    <div id="tabs"></div>
    <div id="tabsel"></div>
    <div id="tabline1"></div>
    <div id="tabline2"></div>
    <div class="vsep" style="left:228px"></div>
    <div class="vsep" style="left:284px"></div>
    <svg style="position:absolute;left:0;top:3px" width="54" height="28"><path d="M0 0 H46 L53 14 L46 28 H0 Z" fill="#f5b041"/></svg>
    <div class="t b" id="t_dftb" style="left:4.9px;top:11.5px;font-size:11.5px;transform:scaleX(1.0922)">DFTB</div>
    <div class="t b" id="t_main" style="left:57.9px;top:11.5px;font-size:11.5px;transform:scaleX(1.1449)">Main</div>
    <div class="t b" id="t_model" style="left:108.4px;top:11.5px;font-size:11.5px;transform:scaleX(1.1283)">Model</div>
    <div class="t b" id="t_prop" style="left:155.9px;top:11.5px;font-size:11.5px;transform:scaleX(1.2041)">Properties</div>
    <div class="t b" id="t_det" style="left:233.7px;top:11.5px;font-size:11.5px;transform:scaleX(1.2116)">Details</div>
    <div class="t b" id="t_multi" style="left:288.9px;top:11.5px;font-size:11.5px;transform:scaleX(1.1737)">MultiLevel</div>
    <!-- search icon -->
    <svg style="position:absolute;left:440px;top:6px" width="22" height="22" viewBox="1171 6 22 22"><circle cx="1179.8" cy="15.7" r="5.2" fill="none" stroke="#1a1a1a" stroke-width="1.6"/><path d="M1184 19.4 L1187.8 22.4" stroke="#1a1a1a" stroke-width="2.3" stroke-linecap="round"/></svg>

    <div class="t b" id="t_title" style="left:167.8px;top:43.5px;font-size:11.5px;transform:scaleX(1.2058)">K-Space Integration</div>
    <!-- round buttons -->
    <svg style="position:absolute;left:414px;top:39px" width="50" height="20" viewBox="1145 39 50 20">
      <circle cx="1155" cy="48.9" r="8.9" fill="#b5b5b5"/>
      <path d="M1151 45.5 H1159 M1151 49.1 H1159 M1151 52.6 H1159" stroke="#e0e0e0" stroke-width="0.9"/>
      <circle cx="1181" cy="48.9" r="9" fill="#4e4e4e"/>
      <text opacity="0.99" x="1181.2" y="53.6" text-anchor="middle" font-family="Liberation Sans, sans-serif" font-size="13" fill="#fff" stroke="#fff" stroke-width="0.45">?</text>
    </svg>

    <div class="t" id="t_ks" style="left:11.2px;top:81.5px;font-size:11.5px;transform:scaleX(1.1049)">K-space:</div>
    <div class="combo" style="top:77px"><div class="btn"></div><svg width="8" height="6"><path d="M0 0 H7 L3.5 5 Z" fill="#333"/></svg></div>
    <div class="t" id="t_normal" style="left:151.5px;top:85.5px;font-size:11.5px;transform:scaleX(1.1170)">Normal</div>

    <div class="t" id="t_kgt" style="left:11.2px;top:135.5px;font-size:11.5px;transform:scaleX(1.1312)">K-space grid type:</div>
    <div class="combo" style="top:131px;background:#ffffe1;border-bottom-color:#ffffe1;border-right-color:#ffffe1"><div class="btn"></div><svg width="8" height="6"><path d="M0 0 H7 L3.5 5 Z" fill="#333"/></svg></div>
    <div class="t" id="t_sym" style="left:151.4px;top:139.5px;font-size:11.5px;transform:scaleX(1.1636)">Symmetric</div>

    <div class="t" id="t_nop" style="left:10.7px;top:189.5px;font-size:11.5px;transform:scaleX(1.1337);color:#a9a9a9">Number of points:</div>
    <div class="entry" style="top:186px;width:320px;background:#e6e6e6"></div>
    <div class="t" id="t_acc" style="left:10.7px;top:212.5px;font-size:11.5px;transform:scaleX(1.1228)">Accuracy:</div>
    <div class="entry" style="top:209px;width:74px;background:#eee"></div>
  </div>
  <div id="topline"></div>
</div>
</body>
</html>
